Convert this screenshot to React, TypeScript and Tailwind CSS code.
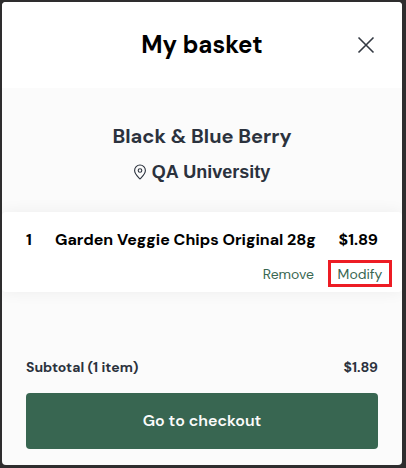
import React, { useState } from 'react';

interface BasketItem {
  id: number;
  name: string;
  quantity: number;
  price: number;
}

const initialItems: BasketItem[] = [
  { id: 1, name: 'Garden Veggie Chips Original 28g', quantity: 1, price: 1.89 },
];

const formatPrice = (value: number) => `$${value.toFixed(2)}`;

function CloseIcon() {
  return (
    <svg width="18" height="18" viewBox="0 0 18 18" fill="none" stroke="currentColor" strokeWidth="1.6" aria-hidden="true">
      <path d="M1.5 1.5 16.5 16.5M16.5 1.5 1.5 16.5" />
    </svg>
  );
}

function PinIcon() {
  return (
    <svg width="12" height="16" viewBox="0 0 12 16" fill="none" stroke="currentColor" strokeWidth="1.1" aria-hidden="true">
      <path d="M6 15C4.6 13.4 0.6 10 0.6 6.4a5.4 5.4 0 0 1 10.8 0C11.4 10 7.4 13.4 6 15Z" strokeLinejoin="round" />
      <circle cx="6" cy="6.5" r="1.8" />
    </svg>
  );
}

interface BasketRowProps {
  item: BasketItem;
  onRemove: (id: number) => void;
}

function BasketRow({ item, onRemove }: BasketRowProps) {
  return (
    <li className="h-20 rounded-sm bg-white px-6 pt-4 shadow-[0_0_16px_rgba(0,0,0,0.06)]">
      <div className="flex text-[16px] leading-6 font-bold text-black">
        <span className="w-[29px] shrink-0">{item.quantity}</span>
        <span className="flex-1 whitespace-nowrap">{item.name}</span>
        <span>{formatPrice(item.price)}</span>
      </div>
      <div className="-mr-[14px] mt-2 flex items-center justify-end gap-[14px] text-[14px] leading-5 text-[#386651]">
        <button type="button" onClick={() => onRemove(item.id)}>
          Remove
        </button>
        <button type="button" className="h-[27px] w-16 border-3 border-[#ed1c24]">
          Modify
        </button>
      </div>
    </li>
  );
}

export default function App() {
  const [items, setItems] = useState<BasketItem[]>(initialItems);

  const count = items.reduce((sum, item) => sum + item.quantity, 0);
  const subtotal = items.reduce((sum, item) => sum + item.quantity * item.price, 0);

  const handleRemove = (id: number) => {
    setItems(items.filter((item) => item.id !== id));
  };

  return (
    <div className="flex min-h-screen bg-[#2e2d2e] pt-[2px] pr-1 pb-[3px] pl-[2px] font-['DM_Sans',Inter,sans-serif]">
      <main className="flex w-full flex-col overflow-hidden rounded bg-[#fbfbfb]">
        <header className="grid h-[86px] grid-cols-[24px_1fr_24px] items-center bg-white px-6">
          <h1 className="col-start-2 text-center text-[24px] leading-8 font-bold text-black">My basket</h1>
          <button type="button" aria-label="Close" className="flex justify-center text-[#343a43]">
            <CloseIcon />
          </button>
        </header>

        <section className="pt-8 pb-[26px] text-center text-[#2b323d]">
          <h2 className="text-[20px] leading-8 font-bold">Black &amp; Blue Berry</h2>
          <p className="mt-[6px] flex items-center justify-center gap-1.5 font-['Liberation_Sans',Arial,sans-serif] text-[18px] leading-7 font-bold">
            <PinIcon />
            QA University
          </p>
        </section>

        <ul>
          {items.map((item) => (
            <BasketRow key={item.id} item={item} onRemove={handleRemove} />
          ))}
        </ul>

        <footer className="mt-auto px-6 pb-4">
          <div className="flex justify-between text-[14px] leading-5 font-bold text-[#2b323d]">
            <span>
              Subtotal ({count} {count === 1 ? 'item' : 'items'})
            </span>
            <span>{formatPrice(subtotal)}</span>
          </div>
          <button
            type="button"
            className="mt-4 h-14 w-full rounded bg-[#386651] text-[16px] leading-6 font-semibold text-[#fbfbfb]"
          >
            Go to checkout
          </button>
        </footer>
      </main>
    </div>
  );
}
